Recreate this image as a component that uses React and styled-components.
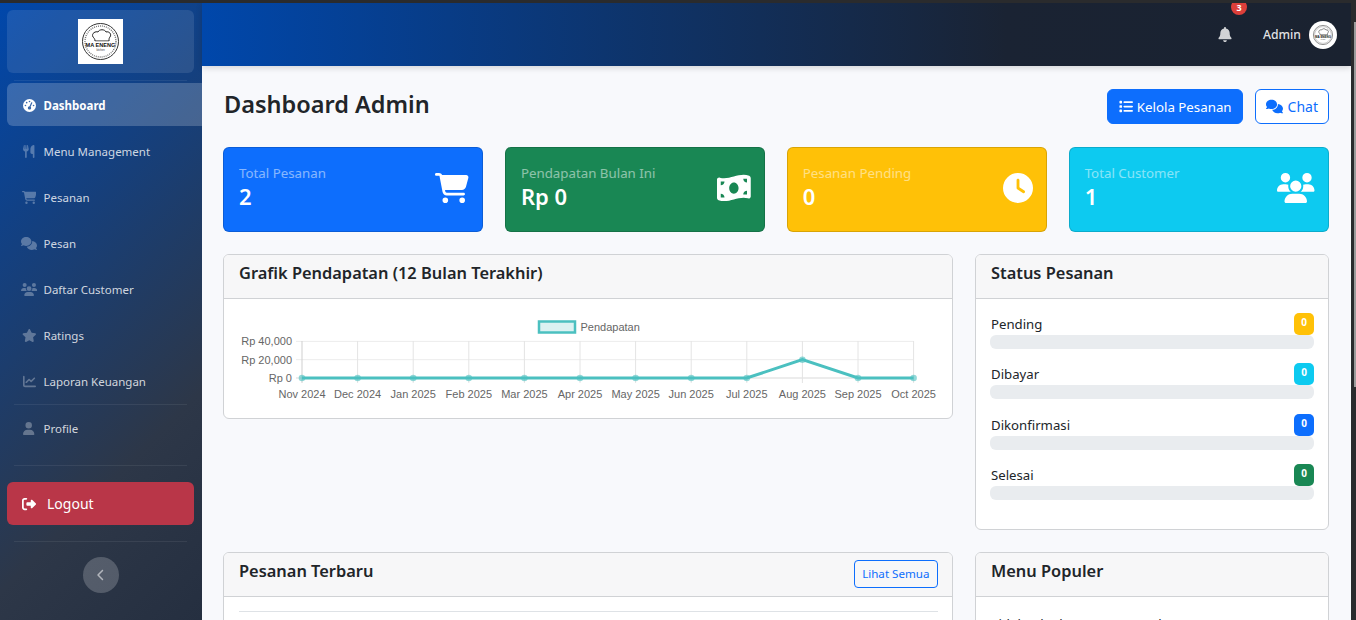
import React from "react";
import styled, { createGlobalStyle } from "styled-components";
import {
  FaBell,
  FaCartShopping,
  FaChartLine,
  FaChevronLeft,
  FaClock,
  FaComments,
  FaGaugeHigh,
  FaList,
  FaMoneyBillWave,
  FaRightFromBracket,
  FaStar,
  FaUser,
  FaUsers,
  FaUtensils,
} from "react-icons/fa6";

const GlobalStyle = createGlobalStyle`
  html, body {
    margin: 0;
    height: 100%;
    overflow: hidden;
    background: #2a2b2d;
    font-family: "Noto Sans", "Open Sans", sans-serif;
    color: #212529;
  }
  * { box-sizing: border-box; }
`;

const Frame = styled.div`
  width: 1356px;
  height: 620px;
  padding-top: 3px;
  display: flex;
  overflow: hidden;
`;

const Shell = styled.div`
  display: flex;
  width: 1351px;
  height: 617px;
  overflow: hidden;
  background: #f8f9fc;
`;

const ScrollRail = styled.div`
  flex: 1;
  padding: 19px 0 0 3px;
`;

const ScrollThumb = styled.div`
  height: 365px;
  background: #9b9b9b;
`;

const Sidebar = styled.aside`
  width: 202px;
  flex: none;
  padding: 7px 0 0 7px;
  background: linear-gradient(135deg, #0047ab 0%, #2d3748 72%, #252f40 100%);
`;

const LogoCard = styled.div`
  width: 187px;
  height: 63px;
  display: flex;
  align-items: center;
  justify-content: center;
  border-radius: 6px;
  background: rgba(255, 255, 255, 0.1);
`;

const Divider = styled.div`
  height: 1px;
  width: 173px;
  margin: ${(p) => p.$margin || "0 0 0 7px"};
  background: rgba(255, 255, 255, 0.07);
`;

const NavItem = styled.div`
  height: 43px;
  margin-bottom: 3px;
  padding: ${(p) => (p.$active ? "2px 0 0 14px" : "1px 0 0 14px")};
  display: flex;
  align-items: center;
  gap: 6.5px;
  font-size: 11.5px;
  font-weight: ${(p) => (p.$active ? 700 : 400)};
  color: ${(p) => (p.$active ? "#fff" : "rgba(255,255,255,.8)")};
  border-radius: 6px 0 0 6px;
  background: ${(p) => (p.$active ? "rgba(255,255,255,.2)" : "transparent")};
`;

const NavIcon = styled.span`
  width: 16px;
  flex: none;
  display: flex;
  justify-content: center;
  color: ${(p) => (p.$active ? "#fff" : "rgba(255,255,255,.3)")};
  svg {
    width: ${(p) => p.$w}px;
    height: 13px;
    flex: none;
  }
`;

const NavList = styled.nav`
  margin-top: 2px;
`;

const LogoutButton = styled.div`
  width: 187px;
  height: 43px;
  display: flex;
  align-items: center;
  gap: 11px;
  padding-left: 15px;
  border-radius: 6px;
  background: #b93648;
  color: #fff;
  font-size: 14px;
  svg {
    width: 14px;
    height: 14px;
  }
`;

const ToggleButton = styled.div`
  width: 36px;
  height: 36px;
  margin: 15px 0 0 76px;
  display: flex;
  align-items: center;
  justify-content: center;
  border-radius: 50%;
  background: rgba(255, 255, 255, 0.2);
  color: rgba(255, 255, 255, 0.55);
  svg {
    width: 12px;
    height: 12px;
  }
`;

const Column = styled.div`
  flex: 1;
  min-width: 0;
  display: flex;
  flex-direction: column;
`;

const Topbar = styled.header`
  height: 63px;
  flex: none;
  display: flex;
  align-items: center;
  justify-content: flex-end;
  padding: 0 14px 0 0;
  background: linear-gradient(90deg, #0047ab 0%, #1a2333 70%, #1a2230 100%);
  box-shadow: 0 2px 6px rgba(0, 0, 0, 0.15);
  position: relative;
  z-index: 1;
`;

const BellWrap = styled.div`
  position: relative;
  display: flex;
  margin-right: 31px;
  color: rgba(255, 255, 255, 0.8);
  svg {
    width: 14px;
    height: 15px;
  }
`;

const BellBadge = styled.span`
  position: absolute;
  top: -28px;
  left: 13px;
  width: 16px;
  height: 16px;
  display: flex;
  align-items: center;
  justify-content: center;
  border-radius: 50%;
  background: #dc3f3a;
  color: #fff;
  font-size: 9px;
  font-weight: 700;
`;

const AdminName = styled.span`
  font-size: 12.2px;
  font-weight: 500;
  color: rgba(255, 255, 255, 0.88);
  margin-right: 8px;
`;

const Avatar = styled.div`
  width: 28px;
  height: 28px;
  border-radius: 50%;
  border: 2px solid rgba(255, 255, 255, 0.75);
  background: #fff;
  overflow: hidden;
  display: flex;
  align-items: center;
  justify-content: center;
`;

const Content = styled.main`
  flex: 1;
  padding: 23px 22px 0 21px;
  overflow: hidden;
`;

const TitleRow = styled.div`
  display: flex;
  align-items: flex-start;
  justify-content: space-between;
  height: 58px;
`;

const PageTitle = styled.h1`
  margin: 0;
  padding-left: 1px;
  font-size: 23.5px;
  line-height: 30px;
  font-weight: 600;
`;

const Actions = styled.div`
  display: flex;
  gap: 12px;
`;

const Button = styled.div`
  height: 35px;
  display: flex;
  align-items: center;
  gap: ${(p) => (p.$solid ? "4px" : "5px")};
  padding: ${(p) => (p.$solid ? "0 10px 0 11px" : "0 10px")};
  font-size: ${(p) => (p.$solid ? "13.3px" : "14px")};
  border-radius: 6px;
  border: 1px solid #0d6efd;
  background: ${(p) => (p.$solid ? "#0d6efd" : "#fff")};
  color: ${(p) => (p.$solid ? "#fff" : "#0d6efd")};
  svg {
    width: ${(p) => (p.$solid ? "14px" : "17px")};
    height: 15px;
  }
`;

const StatGrid = styled.section`
  display: grid;
  grid-template-columns: repeat(4, 1fr);
  gap: 21.5px;
  margin-bottom: 22px;
`;

const StatCard = styled.div`
  height: 85px;
  display: flex;
  align-items: center;
  justify-content: space-between;
  padding: 0 13.5px 0 15px;
  border-radius: 6px;
  border: 1px solid rgba(0, 0, 0, 0.15);
  background: ${(p) => p.$bg};
  color: #fff;
  svg {
    width: ${(p) => p.$iconWidth}px;
    height: 30px;
    flex: none;
    margin-bottom: 3px;
  }
`;

const StatText = styled.div`
  padding-bottom: 7px;
`;

const StatLabel = styled.div`
  font-size: 13.3px;
  line-height: 20px;
  opacity: 0.5;
`;

const StatValue = styled.div`
  font-size: 22px;
  line-height: 26px;
  font-weight: 600;
`;

const PanelGrid = styled.section`
  display: grid;
  grid-template-columns: 730px 354px;
  column-gap: 22px;
  align-items: start;
  margin-bottom: 22px;
`;

const Panel = styled.div`
  background: #fff;
  border: 1px solid #d0d2d5;
  border-radius: 6px;
  overflow: hidden;
  height: ${(p) => p.$height || "auto"};
`;

const PanelHeader = styled.div`
  height: 44px;
  padding: 0 14px 0 15px;
  display: flex;
  justify-content: space-between;
  align-items: center;
  background: #f7f7f8;
  border-bottom: 1px solid #d0d2d5;
`;

const PanelTitle = styled.h5`
  margin: -8px 0 0;
  font-size: 16.4px;
  line-height: 24px;
  font-weight: 600;
`;

const SmallButton = styled.div`
  height: 28px;
  margin-bottom: 2px;
  display: flex;
  align-items: center;
  padding: 0 7.5px;
  font-size: 11.6px;
  color: #0d6efd;
  border: 1px solid #0d6efd;
  border-radius: 4px;
`;

const ChartBody = styled.div`
  height: 119px;
  padding-top: 14px;
`;

const StatusBody = styled.div`
  padding: 14px 14px 0 14px;
`;

const StatusRow = styled.div`
  margin-bottom: 14.3px;
`;

const StatusTop = styled.div`
  height: 22px;
  display: flex;
  justify-content: space-between;
  align-items: flex-start;
  font-size: 13.2px;
  line-height: 22px;
  padding-left: 1px;
`;

const StatusBadge = styled.span`
  width: 20px;
  height: 22px;
  display: flex;
  justify-content: center;
  padding-top: 3px;
  border-radius: 5px;
  font-size: 10px;
  line-height: 12px;
  font-weight: 700;
  color: #fff;
  background: ${(p) => p.$bg};
`;

const Track = styled.div`
  height: 14px;
  border-radius: 6px;
  background: #e9ecef;
`;

const TableRule = styled.div`
  height: 1px;
  margin: 14px 14px 0 15px;
  background: #dee2e6;
`;

const EmptyText = styled.p`
  margin: 0;
  padding: 17px 15px;
  font-size: 13.3px;
  line-height: 20px;
`;

const menuItems = [
  { label: "Dashboard", icon: FaGaugeHigh, w: 13, active: true },
  { label: "Menu Management", icon: FaUtensils, w: 11.5 },
  { label: "Pesanan", icon: FaCartShopping, w: 14.6 },
  { label: "Pesan", icon: FaComments, w: 16 },
  { label: "Daftar Customer", icon: FaUsers, w: 16.2 },
  { label: "Ratings", icon: FaStar, w: 14.6 },
  { label: "Laporan Keuangan", icon: FaChartLine, w: 13 },
];

const stats = [
  { label: "Total Pesanan", value: "2", bg: "#0d6efd", icon: FaCartShopping, w: 33.75 },
  { label: "Pendapatan Bulan Ini", value: "Rp 0", bg: "#198754", icon: FaMoneyBillWave, w: 33.75 },
  { label: "Pesanan Pending", value: "0", bg: "#ffc107", icon: FaClock, w: 30 },
  { label: "Total Customer", value: "1", bg: "#0dcaf0", icon: FaUsers, w: 37.5 },
];

const statuses = [
  { label: "Pending", bg: "#ffc107" },
  { label: "Dibayar", bg: "#0dcaf0" },
  { label: "Dikonfirmasi", bg: "#0d6efd" },
  { label: "Selesai", bg: "#198754" },
];

const months = [
  "Nov 2024", "Dec 2024", "Jan 2025", "Feb 2025", "Mar 2025", "Apr 2025",
  "May 2025", "Jun 2025", "Jul 2025", "Aug 2025", "Sep 2025", "Oct 2025",
];
const revenue = [0, 0, 0, 0, 0, 0, 0, 0, 0, 20000, 0, 0];

function BrandLogo({ size }) {
  return (
    <svg width={size} height={size} viewBox="0 0 45 45">
      <rect width="45" height="45" fill="#fff" />
      <circle cx="22.5" cy="22.5" r="18" fill="none" stroke="#333" strokeWidth="1" />
      <circle cx="22.5" cy="22.5" r="15.5" fill="none" stroke="#777" strokeWidth="1.4" strokeDasharray="1 1" />
      <path
        d="M15 18c-2-4 3-6 5-5 1-3 7-3 8 0 3-1 6 2 4 5-1 1-1 2-1 4H17c0-2-1-3-2-4z"
        fill="#fff"
        stroke="#222"
        strokeWidth="1"
      />
      <rect x="8" y="22.5" width="29" height="6" fill="#fff" />
      <text x="22.5" y="27.5" textAnchor="middle" fontFamily="Liberation Sans" fontWeight="700" fontSize="5.6" fill="#111">
        MA ENENG
      </text>
      <text x="22.5" y="32" textAnchor="middle" fontFamily="Liberation Sans" fontSize="2.6" fill="#333">
        kitchen
      </text>
    </svg>
  );
}

function RevenueChart() {
  const left = 78;
  const step = 55.6;
  const yFor = (v) => 65 - (v / 40000) * 36.6;
  const points = revenue.map((v, i) => `${left + i * step},${yFor(v)}`).join(" ");
  const lab = { fontFamily: "Liberation Sans", fontSize: 11, fill: "#666" };
  return (
    <svg width="728" height="104" viewBox="0 0 728 104" style={{ display: "block" }}>
      <rect x="315" y="8.5" width="36" height="11" fill="rgba(75,192,192,.2)" stroke="#4bc0c0" strokeWidth="2.5" />
      <text x="356.5" y="18" {...lab}>Pendapatan</text>
      {[0, 20000, 40000].map((v) => (
        <g key={v}>
          <line x1="72" x2={left + 11 * step} y1={yFor(v)} y2={yFor(v)} stroke={v === 0 ? "#d9d9d9" : "#ececec"} />
          <text x="68" y={yFor(v) + 4} textAnchor="end" {...lab}>{`Rp ${v.toLocaleString("en-US")}`}</text>
        </g>
      ))}
      {months.map((m, i) => (
        <g key={m}>
          <line x1={left + i * step} x2={left + i * step} y1="28" y2="70" stroke={i === 0 ? "#cfcfcf" : "#e4e4e4"} />
          <text x={left + i * step} y="85" textAnchor="middle" {...lab}>{m}</text>
        </g>
      ))}
      <polyline points={points} fill="none" stroke="#4bc0c0" strokeWidth="3" />
      {revenue.map((v, i) => (
        <circle key={months[i]} cx={left + i * step} cy={yFor(v)} r="3.3" fill="rgba(75,192,192,.6)" />
      ))}
    </svg>
  );
}

export default function App() {
  return (
    <>
      <GlobalStyle />
      <Frame>
        <Shell>
          <Sidebar>
            <LogoCard>
              <BrandLogo size={45} />
            </LogoCard>
            <Divider $margin="7px 0 2px 7px" />
            <NavList>
              {menuItems.map(({ label, icon: Icon, w, active }) => (
                <NavItem key={label} $active={active}>
                  <NavIcon $active={active} $w={w}>
                    <Icon />
                  </NavIcon>
                  {label}
                </NavItem>
              ))}
              <Divider $margin="-1px 0 1px 7px" />
              <NavItem>
                <NavIcon $w={11.4}>
                  <FaUser />
                </NavIcon>
                Profile
              </NavItem>
            </NavList>
            <Divider $margin="16px 0 16px 7px" />
            <LogoutButton>
              <FaRightFromBracket />
              Logout
            </LogoutButton>
            <Divider $margin="16px 0 0 7px" />
            <ToggleButton>
              <FaChevronLeft />
            </ToggleButton>
          </Sidebar>
          <Column>
            <Topbar>
              <BellWrap>
                <FaBell />
                <BellBadge>3</BellBadge>
              </BellWrap>
              <AdminName>Admin</AdminName>
              <Avatar>
                <BrandLogo size={24} />
              </Avatar>
            </Topbar>
            <Content>
              <TitleRow>
                <PageTitle>Dashboard Admin</PageTitle>
                <Actions>
                  <Button $solid>
                    <FaList />
                    Kelola Pesanan
                  </Button>
                  <Button>
                    <FaComments />
                    Chat
                  </Button>
                </Actions>
              </TitleRow>
              <StatGrid>
                {stats.map(({ label, value, bg, icon: Icon, w }) => (
                  <StatCard key={label} $bg={bg} $iconWidth={w}>
                    <StatText>
                      <StatLabel>{label}</StatLabel>
                      <StatValue>{value}</StatValue>
                    </StatText>
                    <Icon />
                  </StatCard>
                ))}
              </StatGrid>
              <PanelGrid>
                <Panel>
                  <PanelHeader>
                    <PanelTitle>Grafik Pendapatan (12 Bulan Terakhir)</PanelTitle>
                  </PanelHeader>
                  <ChartBody>
                    <RevenueChart />
                  </ChartBody>
                </Panel>
                <Panel $height="276px">
                  <PanelHeader>
                    <PanelTitle>Status Pesanan</PanelTitle>
                  </PanelHeader>
                  <StatusBody>
                    {statuses.map((s) => (
                      <StatusRow key={s.label}>
                        <StatusTop>
                          {s.label}
                          <StatusBadge $bg={s.bg}>0</StatusBadge>
                        </StatusTop>
                        <Track />
                      </StatusRow>
                    ))}
                  </StatusBody>
                </Panel>
              </PanelGrid>
              <PanelGrid>
                <Panel $height="240px">
                  <PanelHeader>
                    <PanelTitle>Pesanan Terbaru</PanelTitle>
                    <SmallButton>Lihat Semua</SmallButton>
                  </PanelHeader>
                  <TableRule />
                </Panel>
                <Panel $height="240px">
                  <PanelHeader>
                    <PanelTitle>Menu Populer</PanelTitle>
                  </PanelHeader>
                  <EmptyText>Tidak ada data menu populer</EmptyText>
                </Panel>
              </PanelGrid>
            </Content>
          </Column>
        </Shell>
        <ScrollRail>
          <ScrollThumb />
        </ScrollRail>
      </Frame>
    </>
  );
}
